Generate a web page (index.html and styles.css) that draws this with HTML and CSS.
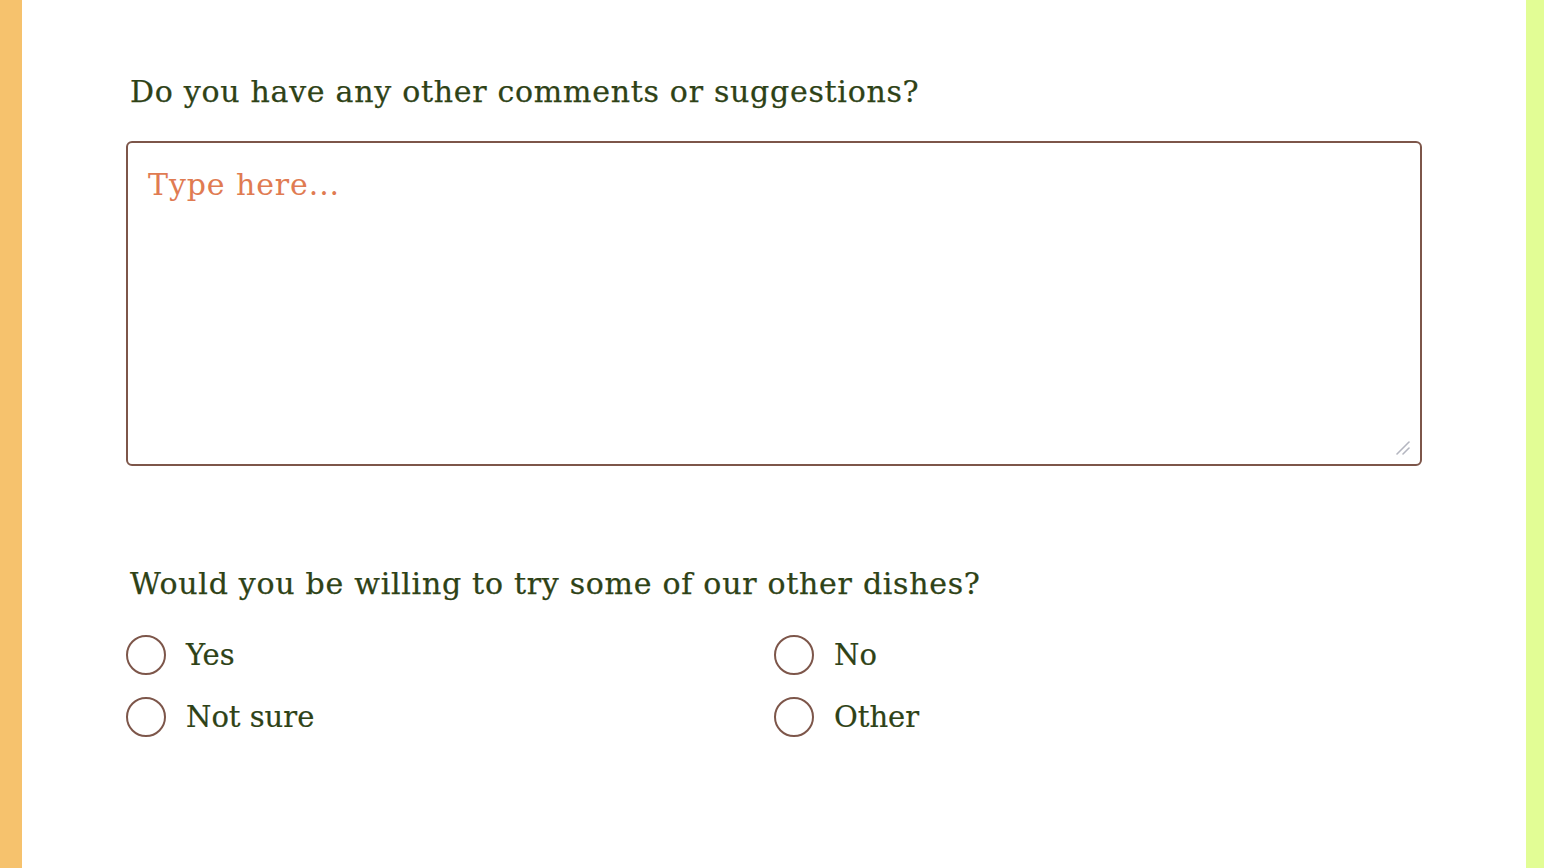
FILE: index.html
```html
<!DOCTYPE html>
<html lang="en">
<head>
<meta charset="utf-8">
<title>Survey</title>
<link rel="stylesheet" href="styles.css">
</head>
<body>
<div class="page">
  <div class="stripe stripe-left"></div>
  <main class="content">
    <section class="question">
      <label class="q-label" for="comments">Do you have any other comments or suggestions?</label>
      <div class="ta-wrap">
        <textarea id="comments" class="comments" placeholder="Type here..."></textarea>
        <svg class="grip" width="16" height="16" viewBox="0 0 16 16" aria-hidden="true">
          <line x1="2" y1="14" x2="14" y2="2" stroke="#b4b6c0" stroke-width="1.6" stroke-linecap="round"/>
          <line x1="8" y1="14" x2="14" y2="8" stroke="#b4b6c0" stroke-width="1.6" stroke-linecap="round"/>
        </svg>
      </div>
    </section>
    <section class="question q-second">
      <div class="q-label">Would you be willing to try some of our other dishes?</div>
      <div class="options">
        <label class="option"><span class="radio"></span><span class="opt-text">Yes</span></label>
        <label class="option"><span class="radio"></span><span class="opt-text">No</span></label>
        <label class="option"><span class="radio"></span><span class="opt-text">Not sure</span></label>
        <label class="option"><span class="radio"></span><span class="opt-text">Other</span></label>
      </div>
    </section>
  </main>
  <div class="stripe stripe-right"></div>
</div>
</body>
</html>
```
FILE: styles.css
```css
html, body {
  margin: 0;
  padding: 0;
  height: 100%;
  background: #ffffff;
}
.page {
  display: flex;
  height: 868px;
  font-family: "DejaVu Serif", "Liberation Serif", serif;
  color: #2e4216;
}
.stripe-left {
  width: 22px;
  background: #f6c26d;
  flex: none;
}
.stripe-right {
  width: 18px;
  background: #e2fd95;
  flex: none;
}
.content {
  flex: 1;
  padding: 0 104px 0 104px;
}
.question {
  display: flex;
  flex-direction: column;
}
.q-label {
  font-size: 30px;
  letter-spacing: 0.72px;
  line-height: 36px;
  padding-left: 4px;
  margin-top: 74px;
  margin-bottom: 31px;
  display: block;
  -webkit-text-stroke: 0.25px #2e4216;
}
.ta-wrap {
  position: relative;
}
.comments {
  display: block;
  box-sizing: border-box;
  width: 100%;
  height: 325px;
  border: 2px solid #7d564a;
  border-radius: 6px;
  padding: 20px 20px;
  font-family: "DejaVu Serif", "Liberation Serif", serif;
  font-size: 30px;
  letter-spacing: 0.9px;
  line-height: 44px;
  color: #2e4216;
  resize: none;
  outline: none;
  margin: 0;
}
.comments::placeholder {
  color: #e07b52;
  opacity: 1;
}
.grip {
  position: absolute;
  right: 11px;
  bottom: 10px;
}
.q-second .q-label {
  margin-top: 100px;
  margin-bottom: 33px;
}
.options {
  display: grid;
  grid-template-columns: 1fr 1fr;
  row-gap: 22px;
}
.option {
  display: flex;
  align-items: center;
  gap: 20px;
  font-size: 29px;
  line-height: 40px;
  -webkit-text-stroke: 0.2px #2e4216;
}
.radio {
  box-sizing: border-box;
  width: 40px;
  height: 40px;
  border: 2px solid #7d564a;
  border-radius: 50%;
  flex: none;
}
```
